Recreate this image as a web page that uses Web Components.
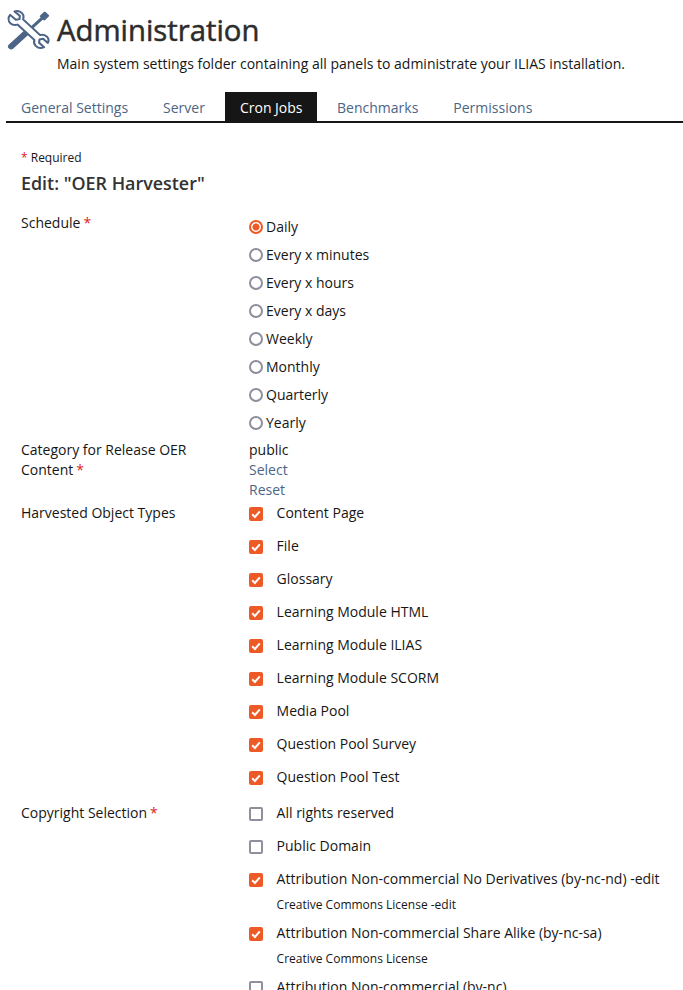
<!DOCTYPE html>
<html lang="en">
<head>
<meta charset="utf-8">
<title>Administration</title>
<style>
    html, body{
        margin:0;
        padding:0;
        height:990px;
        overflow:hidden;
        background:#fff;
        font-family:"Open Sans",sans-serif;
        font-size:14px;
        line-height:20px;
        color:#161616;
    }
</style>
</head>
<body>
<il-page>
    <il-header slot="header" title="Administration" description="Main system settings folder containing all panels to administrate your ILIAS installation."></il-header>
    <il-tabs slot="tabs" active="Cron Jobs" items="General Settings|Server|Cron Jobs|Benchmarks|Permissions"></il-tabs>
    <il-form heading='Edit: "OER Harvester"'>
        <il-row label="Schedule" required gap="3">
            <il-radio checked>Daily</il-radio>
            <il-radio>Every x minutes</il-radio>
            <il-radio>Every x hours</il-radio>
            <il-radio>Every x days</il-radio>
            <il-radio>Weekly</il-radio>
            <il-radio>Monthly</il-radio>
            <il-radio>Quarterly</il-radio>
            <il-radio>Yearly</il-radio>
        </il-row>
        <il-row label="Category for Release OER Content" required gap="3">
            <il-value>public</il-value>
            <il-value link>Select</il-value>
            <il-value link>Reset</il-value>
        </il-row>
        <il-row label="Harvested Object Types" gap="10" lift="7">
            <il-check checked>Content Page</il-check>
            <il-check checked>File</il-check>
            <il-check checked>Glossary</il-check>
            <il-check checked>Learning Module HTML</il-check>
            <il-check checked>Learning Module ILIAS</il-check>
            <il-check checked>Learning Module SCORM</il-check>
            <il-check checked>Media Pool</il-check>
            <il-check checked>Question Pool Survey</il-check>
            <il-check checked>Question Pool Test</il-check>
        </il-row>
        <il-row label="Copyright Selection" required lift="7">
            <il-check>All rights reserved</il-check>
            <il-check>Public Domain</il-check>
            <il-check checked byline="Creative Commons License -edit">Attribution Non-commercial No Derivatives (by-nc-nd) -edit</il-check>
            <il-check checked byline="Creative Commons License">Attribution Non-commercial Share Alike (by-nc-sa)</il-check>
            <il-check>Attribution Non-commercial (by-nc)</il-check>
        </il-row>
    </il-form>
</il-page>

<script>
(function(){

    class IlPage extends HTMLElement{
        constructor(){
            super();
            this.attachShadow({mode:'open'});
            this.shadowRoot.innerHTML = `
            <style>
                :host{ display:block; }
                #top{ padding:0 0 0 6px; }
                #main{ padding:0 15px 0 21px; }
            </style>
            <div id="top"><slot name="header"></slot><slot name="tabs"></slot></div>
            <div id="main"><slot></slot></div>`;
        }
    }
    customElements.define('il-page',IlPage);

    class IlHeader extends HTMLElement{
        constructor(){
            super();
            this.attachShadow({mode:'open'});
            this.shadowRoot.innerHTML = `
            <style>
                :host{ display:block; height:92px; box-sizing:border-box; padding:10px 0 0 1px; }
                #wrap{ display:flex; gap:8px; align-items:flex-start; }
                svg{ width:42px; height:42px; flex:none; overflow:visible; }
                h1{ margin:0; font-size:29.3px; line-height:40px; font-weight:400; color:#2c2c2c; -webkit-text-stroke:.5px #2c2c2c; }
                p{ margin:4px 0 0; font-size:14px; line-height:20px; color:#161616; }
            </style>
            <div id="wrap">
                <svg viewBox="1.05 -0.54 40 43.75" preserveAspectRatio="none" aria-hidden="true">
                    <g fill="none" stroke="#4c6586" stroke-linecap="round" stroke-linejoin="round">
                        <path d="M5 37.5 L23 19.5" stroke-width="6"/>
                        <path d="M24 18.5 L36 6.5" stroke-width="3.2"/>
                        <path d="M33.5 6 L37 2.5 L40 5.5 L36.5 9 Z" stroke-width="2.4" fill="#4c6586"/>
                        <path d="M4 4.5 L9.5 9.6 L13 9 L13.2 5.5 L8.2 1 C11.5 -.2 15.5 1.2 16.6 5 C17 6.6 16.8 8 16.4 9.3 L32.6 25.6 C34.5 25 37 25.4 38.8 27 C40.6 28.9 41 31.6 40 33.8 L35.4 29.4 L32 30.2 L31.6 33.6 L36.4 38.2 C33.6 39.6 30.4 39 28.4 36.8 C26.9 35 26.5 32.8 27.1 30.6 L11 14.6 C8.8 15.4 6.2 15 4.2 13.2 C2 10.8 2.2 7 4 4.5 Z" stroke-width="2" fill="#fff"/>
                    </g>
                </svg>
                <div>
                    <h1></h1>
                    <p></p>
                </div>
            </div>`;
        }
        connectedCallback(){
            this.shadowRoot.querySelector('h1').textContent = this.getAttribute('title');
            this.shadowRoot.querySelector('p').textContent = this.getAttribute('description');
        }
    }
    customElements.define('il-header',IlHeader);

    class IlTabs extends HTMLElement{
        constructor(){
            super();
            this.attachShadow({mode:'open'});
            this.shadowRoot.innerHTML = `
            <style>
                :host{ display:block; }
                #bar{ display:flex; height:29px; border-bottom:2px solid #161616; }
                a{ display:block; padding:6px 15px 0; margin-right:5px; line-height:20px; font-size:14px; color:#4c6586; }
                a.on{ background:#161616; color:#fff; padding-right:14.5px; }
            </style>
            <div id="bar"></div>`;
        }
        connectedCallback(){
            const bar = this.shadowRoot.getElementById('bar');
            this.getAttribute('items').split('|').forEach(name => {
                const a = document.createElement('a');
                a.textContent = name;
                if(name === this.getAttribute('active')) a.className = 'on';
                bar.appendChild(a);
            });
        }
    }
    customElements.define('il-tabs',IlTabs);

    class IlForm extends HTMLElement{
        constructor(){
            super();
            this.attachShadow({mode:'open'});
            this.shadowRoot.innerHTML = `
            <style>
                :host{ display:block; padding-top:25px; }
                #req{ font-size:12px; line-height:20px; color:#161616; }
                #req span{ color:#e01c1c; }
                h2{ margin:0 0 15px; font-size:17.9px; line-height:30px; font-weight:600; color:#333; }
            </style>
            <div id="req"><span>*</span> Required</div>
            <h2></h2>
            <slot></slot>`;
        }
        connectedCallback(){
            this.shadowRoot.querySelector('h2').textContent = this.getAttribute('heading');
        }
    }
    customElements.define('il-form',IlForm);

    class IlRow extends HTMLElement{
        constructor(){
            super();
            this.attachShadow({mode:'open'});
            this.shadowRoot.innerHTML = `
            <style>
                :host{ display:grid; grid-template-columns:228px 1fr; }
                #label{ padding-right:30px; line-height:20px; }
                #label span{ color:#e01c1c; margin-left:3px; }
                #field{ display:block; }
            </style>
            <div id="label"></div>
            <div id="field"><slot></slot></div>`;
        }
        connectedCallback(){
            const label = this.shadowRoot.getElementById('label');
            label.textContent = this.getAttribute('label');
            if(this.hasAttribute('required')){
                const star = document.createElement('span');
                star.textContent = '*';
                label.appendChild(star);
            }
            // spacing that differs per row in the original form
            this.style.marginBottom = (this.getAttribute('gap') || 0) + 'px';
            this.shadowRoot.getElementById('field').style.marginTop = -(this.getAttribute('lift') || 0) + 'px';
        }
    }
    customElements.define('il-row',IlRow);

    class IlValue extends HTMLElement{
        constructor(){
            super();
            this.attachShadow({mode:'open'});
            this.shadowRoot.innerHTML = `
            <style>
                :host{ display:block; line-height:20px; }
                :host([link]){ color:#4c6586; }
            </style>
            <slot></slot>`;
        }
    }
    customElements.define('il-value',IlValue);

    class IlRadio extends HTMLElement{
        constructor(){
            super();
            this.attachShadow({mode:'open'});
            this.shadowRoot.innerHTML = `
            <style>
                :host{ display:flex; align-items:center; height:28px; }
                i{ box-sizing:border-box; width:14px; height:14px; border:2px solid #8f8f9d; border-radius:50%; margin-right:3px; flex:none; background:#fff; }
                :host([checked]) i{ border-color:#ee5a26; background:radial-gradient(circle,#ee5a26 0 3.2px,#fff 3.9px); }
            </style>
            <i></i><slot></slot>`;
        }
    }
    customElements.define('il-radio',IlRadio);

    class IlCheck extends HTMLElement{
        constructor(){
            super();
            this.attachShadow({mode:'open'});
            this.shadowRoot.innerHTML = `
            <style>
                :host{ display:block; }
                #line{ display:flex; align-items:center; height:33px; }
                #box{ box-sizing:border-box; width:14px; height:14px; border:2px solid #8f8f9d; border-radius:2px; margin:2px 13.6px 0 0; flex:none; display:flex; }
                :host([checked]) #box{ background:#ee5a26; border:0; }
                svg{ display:none; width:14px; height:14px; }
                :host([checked]) svg{ display:block; }
                #by{ font-size:12px; line-height:20px; margin:0 0 0 27.6px; height:21px; color:#161616; }
                #by:empty{ display:none; }
            </style>
            <div id="line">
                <span id="box"><svg viewBox="0 0 14 14"><path d="M3.2 7.3 L5.9 10 L10.8 4.4" fill="none" stroke="#fff" stroke-width="2"/></svg></span>
                <span><slot></slot></span>
            </div>
            <div id="by"></div>`;
        }
        connectedCallback(){
            this.shadowRoot.getElementById('by').textContent = this.getAttribute('byline') || '';
        }
    }
    customElements.define('il-check',IlCheck);

})();
</script>
</body>
</html>
